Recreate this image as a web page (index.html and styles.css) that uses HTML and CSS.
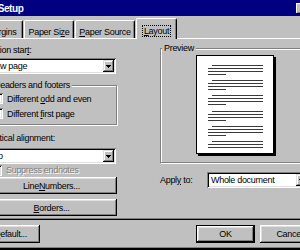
FILE: index.html
```html
<!DOCTYPE html>
<html>
<head>
<meta charset="utf-8">
<title>Page Setup</title>
<link rel="stylesheet" href="styles.css">
</head>
<body>
<div class="dialog">
  <div class="titlebar">
    <span class="title">Page Setup</span>
    <span class="tb-btn"></span>
  </div>
  <div class="tabs">
    <div class="tab t-margins"><u>M</u>argins</div>
    <div class="tab t-size">Paper Si<u>z</u>e</div>
    <div class="tab t-source"><u>P</u>aper Source</div>
    <div class="tab t-layout"><span class="focus"><u>L</u>ayout</span></div>
  </div>
  <div class="panel">
    <div class="col-left">
      <div class="lbl lbl-section">Section star<u>t</u>:</div>
      <div class="select sel-section"><span class="sel-text">New page</span><span class="sel-btn"><svg width="5" height="3" viewBox="0 0 5 3"><path d="M0 0h5v1H0zM1 1h3v1H1zM2 2h1v1H2z" fill="#000"/></svg></span></div>
      <div class="group hf">
        <div class="legend"><span>Headers and footers</span></div>
        <div class="check"><span class="box"></span><span>Different <u>o</u>dd and even</span></div>
        <div class="check"><span class="box"></span><span>Different <u>f</u>irst page</span></div>
      </div>
      <div class="lbl lbl-valign"><u>V</u>ertical alignment:</div>
      <div class="select sel-valign"><span class="sel-text">Top</span><span class="sel-btn"><svg width="5" height="3" viewBox="0 0 5 3"><path d="M0 0h5v1H0zM1 1h3v1H1zM2 2h1v1H2z" fill="#000"/></svg></span></div>
      <div class="check disabled"><span class="box"></span><span>Suppress endnotes</span></div>
      <div class="btn wide b-line">Line <u>N</u>umbers...</div>
      <div class="btn wide b-borders"><u>B</u>orders...</div>
    </div>
    <div class="col-right">
      <div class="group preview">
        <div class="legend"><span>Preview</span></div>
        <div class="page">
          <svg width="76" height="97" viewBox="0 0 76 97" shape-rendering="crispEdges">
            <g fill="#3a3a3a">
              <rect x="15" y="9" width="51" height="1"/><rect x="11" y="12" width="55" height="1"/><rect x="11" y="15" width="55" height="1"/><rect x="11" y="18" width="18" height="1"/>
              <rect x="15" y="24" width="51" height="1"/><rect x="11" y="27" width="55" height="1"/><rect x="11" y="30" width="55" height="1"/><rect x="11" y="33" width="18" height="1"/>
              <rect x="15" y="39" width="51" height="1"/><rect x="11" y="42" width="55" height="1"/><rect x="11" y="45" width="55" height="1"/><rect x="11" y="48" width="18" height="1"/>
              <rect x="15" y="55" width="51" height="1"/><rect x="11" y="58" width="55" height="1"/><rect x="11" y="61" width="55" height="1"/><rect x="11" y="64" width="18" height="1"/>
              <rect x="15" y="70" width="51" height="1"/><rect x="11" y="73" width="55" height="1"/><rect x="11" y="76" width="55" height="1"/><rect x="11" y="79" width="18" height="1"/>
              <rect x="15" y="85" width="51" height="1"/><rect x="11" y="88" width="55" height="1"/><rect x="11" y="91" width="55" height="1"/>
            </g>
          </svg>
        </div>
      </div>
      <div class="apply">
        <span class="apply-lbl">Appl<u>y</u> to:</span>
        <div class="select sel-apply"><span class="sel-text">Whole document</span><span class="sel-btn"><svg width="5" height="3" viewBox="0 0 5 3"><path d="M0 0h5v1H0zM1 1h3v1H1zM2 2h1v1H2z" fill="#000"/></svg></span></div>
      </div>
    </div>
  </div>
  <div class="actions">
    <div class="btn b-default"><u>D</u>efault...</div>
    <div class="btn b-ok">OK</div>
    <div class="btn b-cancel">Cancel</div>
  </div>
</div>
</body>
</html>
```
FILE: styles.css
```css
* { box-sizing: border-box; }
html, body { margin: 0; padding: 0; }
body {
  width: 300px;
  height: 250px;
  overflow: hidden;
  background: #c0c0c0;
  font-family: "Liberation Sans", Arial, sans-serif;
  font-size: 9px;
  letter-spacing: -0.3px;
  line-height: 12px;
  color: #000;
}
u { text-decoration: underline; text-underline-offset: 1px; }

.dialog {
  width: 350px;
  height: 250px;
  margin-left: -26px;
  background: #c0c0c0;
  display: flex;
  flex-direction: column;
  box-shadow: inset 0 -2px #000, inset 0 -3px #808080;
}

.titlebar {
  height: 16px;
  flex: none;
  background: #000080;
  display: flex;
  align-items: flex-start;
  justify-content: space-between;
  padding: 0 12px 0 0;
}
.title {
  color: #fff;
  font-weight: bold;
  font-size: 10px;
  letter-spacing: -0.4px;
  line-height: 15px;
  padding-top: 1px;
  margin-left: -1px;
}
.tb-btn {
  width: 16px;
  height: 11px;
  margin-top: 3px;
  background: #c0c0c0;
  box-shadow: inset -1px -1px #000, inset 1px 1px #fff, inset -2px -2px #808080;
}

.tabs {
  flex: none;
  display: flex;
  align-items: flex-end;
  gap: 1px;
  height: 20px;
  margin-top: 2px;
  padding-left: 6px;
  position: relative;
  z-index: 1;
}
.tab {
  height: 18px;
  padding-top: 5px;
  text-align: center;
  white-space: nowrap;
  background: #c0c0c0;
  border: 1px solid #fff;
  border-right-color: #000;
  border-bottom: none;
  border-radius: 2px 2px 0 0;
  box-shadow: inset -1px 0 #808080;
}
.t-margins { width: 43px; }
.t-size { width: 50px; }
.t-source { width: 60px; }
.t-layout {
  width: 41px;
  height: 21px;
  margin-bottom: -1px;
  padding-top: 6px;
}
.focus { outline: 1px dotted #000; outline-offset: 0; padding: 0 1px; }

.panel {
  flex: none;
  height: 182px;
  margin: 0 2px;
  padding-left: 9px;
  display: flex;
  box-shadow: inset 0 1px #fff, inset 1px 0 #fff, inset 0 -1px #000, inset -1px 0 #000, inset 0 -2px #808080, inset -2px 0 #808080;
}
.col-left {
  width: 132px;
  display: flex;
  flex-direction: column;
}
.lbl { white-space: nowrap; }
.lbl-section { margin-top: 6px; margin-left: -2px; }
.lbl-valign { margin-top: 7px; padding-left: 2px; }

.select {
  height: 16px;
  display: flex;
  align-items: center;
  padding: 2px;
  background: #fff;
  box-shadow: inset 1px 1px #808080, inset -1px -1px #fff, inset 2px 2px #000, inset -2px -2px #dfdfdf;
}
.sel-text { flex: 1; padding-left: 2px; white-space: nowrap; overflow: hidden; }
.sel-btn {
  width: 11px;
  height: 12px;
  flex: none;
  background: #c0c0c0;
  display: flex;
  align-items: center;
  justify-content: center;
  box-shadow: inset -1px -1px #000, inset 1px 1px #dfdfdf, inset -2px -2px #808080, inset 2px 2px #fff;
}
.sel-btn svg { display: block; }
.sel-section { width: 131px; margin-top: 2px; }
.sel-valign { width: 131px; margin-top: 4px; }

.group {
  border: 1px solid #808080;
  box-shadow: inset 1px 1px #fff, 1px 1px #fff;
}
.legend { height: 12px; margin-top: -7px; white-space: nowrap; }
.legend span { background: #c0c0c0; padding: 0 2px; }
.hf { width: 132px; margin-top: 11px; padding-bottom: 3px; }
.hf .legend span { margin-left: 6px; }

.check {
  height: 15px;
  display: flex;
  align-items: center;
  white-space: nowrap;
}
.box {
  width: 11px;
  height: 11px;
  flex: none;
  margin: 0 4px 0 6px;
  background: #fff;
  box-shadow: inset 1px 1px #808080, inset -1px -1px #fff, inset 2px 2px #000, inset -2px -2px #dfdfdf;
}
.check.disabled { height: 12px; color: #808080; text-shadow: 1px 1px #fff; }
.check.disabled .box { background: #c0c0c0; margin-left: 6px; }

.btn {
  height: 18px;
  display: flex;
  align-items: center;
  justify-content: center;
  white-space: nowrap;
  background: #c0c0c0;
  box-shadow: inset -1px -1px #000, inset 1px 1px #fff, inset -2px -2px #808080, inset 2px 2px #dfdfdf;
}
.btn.wide { width: 131px; height: 17px; margin-left: 1px; }
.b-line { margin-top: 1px; }
.b-borders { margin-top: 5px; }

.col-right {
  width: 150px;
  margin-left: 43px;
  display: flex;
  flex-direction: column;
}
.preview { height: 115px; margin-top: 10px; }
.preview .legend span { margin-left: 1px; }
.page {
  width: 78px;
  height: 99px;
  margin: 1px 0 0 35px;
  background: #fff;
  border: 1px solid #000;
  box-shadow: 2px 2px 0 #000;
}
.page svg { display: block; }

.apply {
  display: flex;
  align-items: center;
  margin-top: 9px;
  height: 16px;
}
.apply-lbl { width: 47px; white-space: nowrap; }
.sel-apply { width: 102px; }

.actions {
  flex: none;
  display: flex;
  margin-top: 5px;
  padding: 0 5px 0 7px;
}
.b-default { width: 59px; }
.b-ok {
  width: 59px;
  margin-left: auto;
  border: 1px solid #000;
}
.b-cancel { width: 59px; margin-left: 5px; }
```
